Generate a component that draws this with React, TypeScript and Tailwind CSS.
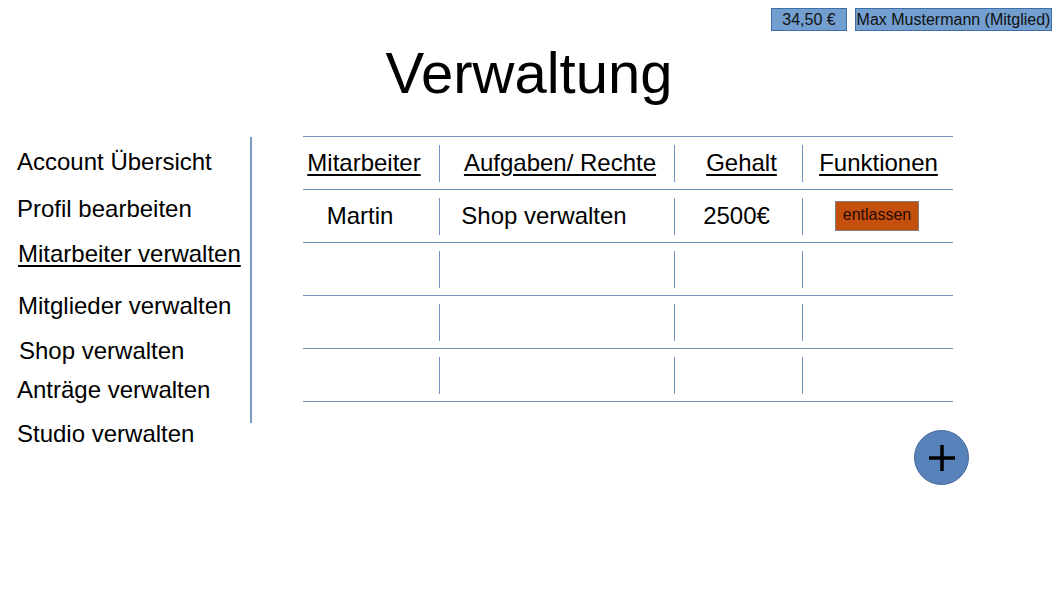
import React from "react";

const font = { fontFamily: '"Liberation Sans", Arial, sans-serif' };

const navItems = [
  { label: "Account Übersicht", cls: "mt-[12px] ml-[17px]" },
  { label: "Profil bearbeiten", cls: "mt-[19px] ml-[17px]" },
  { label: "Mitarbeiter verwalten", cls: "mt-[17px] ml-[18px] underline underline-offset-[3px] decoration-[1.5px]" },
  { label: "Mitglieder verwalten", cls: "mt-[24px] ml-[18px]" },
  { label: "Shop verwalten", cls: "mt-[17px] ml-[19px]" },
  { label: "Anträge verwalten", cls: "mt-[11px] ml-[17px]" },
  { label: "Studio verwalten", cls: "mt-[16px] ml-[17px]" },
];

const Cell: React.FC<{ first?: boolean; className?: string; children?: React.ReactNode }> = ({ first, className = "", children }) => (
  <div className="flex items-center h-[52px]">
    <div className={`flex-1 h-[37px] flex items-center justify-center ${first ? "" : "border-l border-[#7393c0]"} ${className}`}>
      {children}
    </div>
  </div>
);

const Row: React.FC<{ children?: React.ReactNode }> = ({ children }) => (
  <div className="grid grid-cols-[136px_235px_128px_151px] border-t border-[#7393c0]">{children}</div>
);

export default function App() {
  return (
    <div className="w-[1058px] h-[595px] bg-white text-black overflow-hidden" style={font}>
      <header className="flex justify-end gap-[8px] pt-[8px] pr-[6px]">
        <div className="w-[76px] h-[23px] bg-[#729fcf] border border-[#3f6ea8] flex items-center justify-center text-[16px] text-[#111]">
          34,50 €
        </div>
        <div className="w-[197px] h-[23px] bg-[#729fcf] border border-[#3f6ea8] flex items-center justify-center text-[16px] text-[#111]">
          Max Mustermann (Mitglied)
        </div>
      </header>

      <h1 className="mt-[13px] text-center text-[58px] leading-none">Verwaltung</h1>

      <main className="flex mt-[34px]">
        <nav className="w-[250px] flex flex-col text-[24px] leading-[28px]">
          {navItems.map((item) => (
            <div key={item.label} className={item.cls}>
              {item.label}
            </div>
          ))}
        </nav>
        <div className="w-[2px] h-[286px] mt-[1px] bg-[#7a97c2]" />

        <section className="ml-[51px] flex flex-col">
          <div className="w-[650px] text-[24px] leading-[28px] border-b border-[#7393c0]">
            <Row>
              <Cell first className="pr-[14px]"><span className="underline underline-offset-[3px]">Mitarbeiter</span></Cell>
              <Cell className="pl-[6px]"><span className="underline underline-offset-[3px]">Aufgaben/ Rechte</span></Cell>
              <Cell className="pl-[6px]"><span className="underline underline-offset-[3px]">Gehalt</span></Cell>
              <Cell className="pl-[1px]"><span className="underline underline-offset-[3px]">Funktionen</span></Cell>
            </Row>
            <Row>
              <Cell first className="pr-[22px]">Martin</Cell>
              <Cell className="pr-[26px]">Shop verwalten</Cell>
              <Cell className="pr-[4px]">2500€</Cell>
              <Cell className="pr-[2px]">
                <button className="w-[84px] h-[30px] bg-[#c5500e] border border-[#7b7f88] text-[16px] leading-none text-[#260800] pb-[2px]">
                  entlassen
                </button>
              </Cell>
            </Row>
            {[0, 1, 2].map((i) => (
              <Row key={i}>
                <Cell first />
                <Cell />
                <Cell />
                <Cell />
              </Row>
            ))}
          </div>

          <div className="flex pl-[611px] mt-[28px]">
            <button className="w-[55px] h-[55px] rounded-full bg-[#5882ba] border border-[#46689a] flex items-center justify-center">
              <svg width="30" height="30" viewBox="0 0 30 30">
                <path d="M15 2v26M2 15h26" stroke="#000" strokeWidth="3.5" />
              </svg>
            </button>
          </div>
        </section>
      </main>
    </div>
  );
}
